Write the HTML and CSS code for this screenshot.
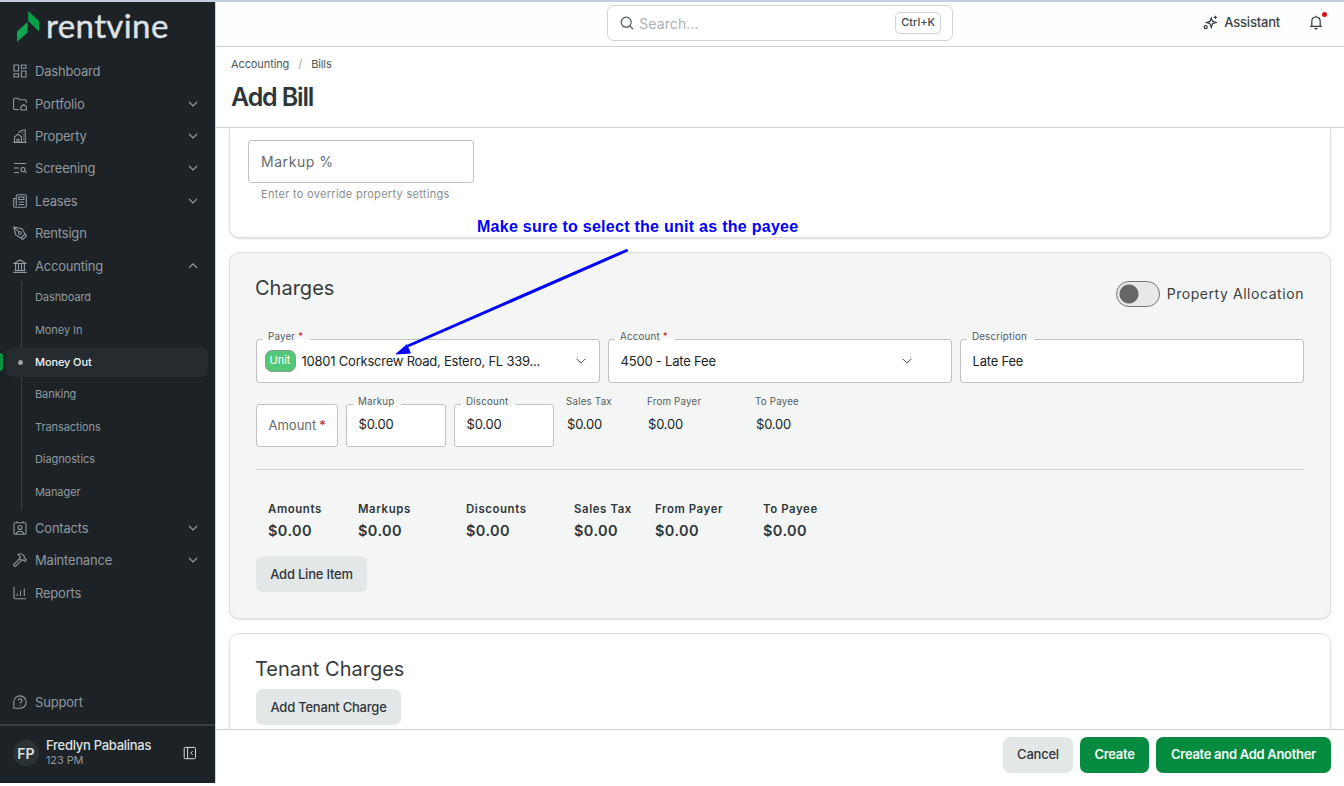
FILE: index.html
```html
<!DOCTYPE html>
<html lang="en">
<head>
<meta charset="utf-8">
<title>Add Bill</title>
<link rel="stylesheet" href="styles.css">
</head>
<body>
<div class="app">
  <aside class="sidebar">
    <div class="logo">
      <svg class="logo-mark" width="22" height="32" viewBox="0 0 22 32"><path fill="#12a650" d="M0 20.5 10.6 11v10.5L0 31z"/><path fill="#07a04a" d="M11.2 0 22 10v10.5L11.2 10z"/></svg>
      <span class="wordmark">rentvine</span>
    </div>
    <nav class="nav">
      <a class="item"><svg class="ico" viewBox="0 0 14 14"><path d="M1 1h4.6v6H1zM8.4 1H13v3.3H8.400zM8.400 7H13v6H8.400zM1 9.700h4.600V13H1z"/></svg><span>Dashboard</span></a>
      <a class="item"><svg class="ico" viewBox="0 0 14 14"><path d="M6 12.500H1.800C1 12.500.6 12 .6 11.300V2.500c0-.7.5-1.200 1.200-1.200h3.100l1.600 1.500h5.500c.8 0 1.400.5 1.400 1.300v2"/><path d="M8 13v-3.300l2.700-2.200 2.700 2.200V13z"/></svg><span>Portfolio</span><svg class="chev" viewBox="0 0 10 6"><path d="m1 .8 4 4 4-4"/></svg></a>
      <a class="item"><svg class="ico" viewBox="0 0 14 14"><path d="M.3 13.400h13.400M1.500 13.400V8L5 5l3.500 3v5.400M4 13.400v-3.200h2v3.200M5.300 3.500 8.500 1.500l3.700-.7v12.600M8.500 3.500h1.300M10 5.600h.8M10 8h.8M10 10.400h.8"/></svg><span>Property</span><svg class="chev" viewBox="0 0 10 6"><path d="m1 .8 4 4 4-4"/></svg></a>
      <a class="item"><svg class="ico" viewBox="0 0 14 14"><path d="M.8 2.500h12.400M.8 7H6M.8 11.500H6"/><circle cx="10" cy="8.600" r="2.100"/><path d="m11.600 10.200 1.900 2"/></svg><span>Screening</span><svg class="chev" viewBox="0 0 10 6"><path d="m1 .8 4 4 4-4"/></svg></a>
      <a class="item"><svg class="ico" viewBox="0 0 14 14"><path d="M3.300 11.800V2c0-.7.500-1.300 1.300-1.300H12c.8 0 1.300.6 1.300 1.300v10c0 .8-.5 1.300-1.300 1.300H2C1.200 13.300.7 12.800.7 12V4.500h2.600v7.300M5.700 3h5.200v2.500H5.700zM5.500 8h5.600M5.500 10.500h5.600"/></svg><span>Leases</span><svg class="chev" viewBox="0 0 10 6"><path d="m1 .8 4 4 4-4"/></svg></a>
      <a class="item"><svg class="ico" viewBox="0 0 14 14"><path d="M.8 1 9 2.700l3 5.300-4 4-5.300-3zM1 1.200l4.600 4.500M12 8l1.600 1.600-4 4L8 12"/><circle cx="6.800" cy="6.900" r="1.400"/></svg><span>Rentsign</span></a>
      <a class="item"><svg class="ico" viewBox="0 0 14 14"><path d="M.5 13.400h13M1.500 11.500h11M1 4.500 7 1l6 3.500zM2.600 4.500v7M5.500 5v6.500M8.500 5v6.500M11.400 4.500v7"/></svg><span>Accounting</span><svg class="chev" viewBox="0 0 10 6"><path d="m1 4.800 4-4 4 4"/></svg></a>
      <div class="subnav">
        <a class="sub">Dashboard</a>
        <a class="sub">Money In</a>
        <a class="sub current">Money Out</a>
        <a class="sub">Banking</a>
        <a class="sub">Transactions</a>
        <a class="sub">Diagnostics</a>
        <a class="sub">Manager</a>
      </div>
      <a class="item"><svg class="ico" viewBox="0 0 14 14"><rect x="1" y="1.700" width="12" height="11.600" rx="1.300"/><path d="M3.800.3v1.400M10.200.3v1.400M3 13c.6-2 2-2.800 4-2.800s3.400.8 4 2.800"/><circle cx="7" cy="6.500" r="2"/></svg><span>Contacts</span><svg class="chev" viewBox="0 0 10 6"><path d="m1 .8 4 4 4-4"/></svg></a>
      <a class="item"><svg class="ico" viewBox="0 0 14 14"><path d="M6.400 5.800.9 11.300c-.8.800.9 2.600 1.800 1.800L8.200 7.600M5 1.500c1.700-1 3.800-.8 5.200.6l1 1v1.800l2.300 1.900-1.800 1.800-2-1.900-1.500.8-1.900-2L7.500 4z"/></svg><span>Maintenance</span><svg class="chev" viewBox="0 0 10 6"><path d="m1 .8 4 4 4-4"/></svg></a>
      <a class="item"><svg class="ico" viewBox="0 0 14 14"><path d="M1 .8v10.500c0 .8.500 1.400 1.300 1.400H13M4.300 10V7.500M7.500 10V4.500M11.300 10V2.500"/></svg><span>Reports</span></a>
    </nav>
    <a class="item support"><svg class="ico" viewBox="0 0 14 14"><path d="M.8 13.300V7A6.200 6.200 0 1 1 7 13.300zM5.200 5.600c0-2.300 3.800-2.300 3.800 0C9 7 7.100 7 7.100 8.500M7.100 10v1"/></svg><span>Support</span></a>
    <div class="user">
      <span class="avatar">FP</span>
      <div class="who"><b>Fredlyn Pabalinas</b><small>123 PM</small></div>
      <svg class="collapse" width="14" height="14" viewBox="0 0 14 14"><rect x="1.200" y="1.400" width="11.300" height="11.300" rx="1"/><path d="M4.600 1.400v11.300M9.700 5 7.700 7l2 2"/></svg>
    </div>
  </aside>

  <main class="main">
    <header class="topbar">
      <div class="search">
        <svg width="14" height="14" viewBox="0 0 14 14"><circle cx="6.200" cy="6.200" r="5"/><path d="m9.800 9.800 3.200 3.200"/></svg>
        <span class="hint">Search...</span>
        <span class="kbd">Ctrl+K</span>
      </div>
      <div class="actions">
        <svg class="spark" width="15" height="15" viewBox="0 0 15 15"><path d="M8.300 3 9.500 6.400l3.500 1.200-3.500 1.200-1.200 3.700-1.300-3.700-3.500-1.200L7 6.400zM12.400.8v3M10.900 2.300h3"/><circle cx="2.700" cy="12.200" r="1.500"/></svg>
        <span class="assist">Assistant</span>
        <span class="bell"><svg width="14" height="15" viewBox="0 0 14 15"><path d="M1.200 11.300h11.600M2.800 11V6.500C2.800 3.800 4.600 2 7 2s4.200 1.800 4.200 4.500V11M7 2V.8M5.700 13c.4 1.100 2.200 1.100 2.600 0"/></svg><i class="dot"></i></span>
      </div>
    </header>
    <div class="heading">
      <div class="crumbs"><span>Accounting</span><i>/</i><span>Bills</span></div>
      <h1>Add Bill</h1>
    </div>
    <div class="content">
      <section class="card first">
        <div class="field percent"><span class="ph">Markup %</span></div>
        <p class="help">Enter to override property settings</p>
      </section>
      <section class="card charges">
        <div class="card-head">
          <h2>Charges</h2>
          <div class="toggle-wrap"><span class="toggle"></span><span class="toggle-label">Property Allocation</span></div>
        </div>
        <div class="row3">
          <div class="field"><label>Payer <em>*</em></label><span class="chip">Unit</span><span class="payer">10801 Corkscrew Road, Estero, FL 339...</span><svg class="drop" viewBox="0 0 10 6"><path d="m.5.6 4.500 4.500L9.500.6"/></svg></div>
          <div class="field account"><label>Account <em>*</em></label><span>4500 - Late Fee</span><svg class="drop" viewBox="0 0 10 6"><path d="m.5.6 4.500 4.500L9.500.6"/></svg></div>
          <div class="field"><label>Description</label><span>Late Fee</span></div>
        </div>
        <div class="row-amounts">
          <div class="field amount"><span class="ph">Amount</span><em>*</em></div>
          <div class="field small"><label>Markup</label><span>$0.00</span></div>
          <div class="field small"><label>Discount</label><span>$0.00</span></div>
          <div class="plain"><span>Sales Tax</span><b>$0.00</b></div>
          <div class="plain"><span>From Payer</span><b>$0.00</b></div>
          <div class="plain"><span>To Payee</span><b>$0.00</b></div>
        </div>
        <div class="totals">
          <div><span>Amounts</span><b>$0.00</b></div>
          <div><span>Markups</span><b>$0.00</b></div>
          <div><span>Discounts</span><b>$0.00</b></div>
          <div><span>Sales Tax</span><b>$0.00</b></div>
          <div><span>From Payer</span><b>$0.00</b></div>
          <div><span>To Payee</span><b>$0.00</b></div>
        </div>
        <button class="btn line">Add Line Item</button>
      </section>
      <section class="card tenant">
        <h2>Tenant Charges</h2>
        <button class="btn add-tenant">Add Tenant Charge</button>
      </section>
    </div>
    <footer class="footer">
      <button class="btn cancel">Cancel</button>
      <button class="btn primary">Create</button>
      <button class="btn primary wide">Create and Add Another</button>
    </footer>
  </main>
</div>
<div class="note">Make sure to select the unit as the payee</div>
<svg class="arrow" width="240" height="112" viewBox="0 0 240 112"><path d="M235.500 4.500 18 99.500" stroke="#00f" stroke-width="3" stroke-linecap="round"/><path d="M4 108.500 16 98l4 9.500z" fill="#00f"/></svg>
</body>
</html>
```
FILE: styles.css
```css
* { box-sizing: border-box; }
body { margin: 0; background: #fff; font-family: Inter, "Liberation Sans", sans-serif; color: #2f3639; overflow: hidden; }
h1, h2, p { margin: 0; font-weight: 400; }
svg { fill: none; flex: none; }
em { color: #b3202a; font-style: normal; }
.app { display: flex; height: 783px; border-top: 2px solid #c5cfe3; }

/* Sidebar */
.sidebar { width: 215px; background: #1d2226; display: flex; flex-direction: column; color: #8f999f; }
.logo { height: 53px; padding: 9px 0 0 17px; display: flex; gap: 7px; }
.wordmark { font: 33px/29px Lato, sans-serif; color: #dfe3e6; letter-spacing: .4px; -webkit-text-stroke: .4px #dfe3e6; }
.item { height: 32.400px; display: flex; align-items: center; padding: 0 17px 0 13px; font-size: 13px; letter-spacing: -.2px; }
.ico { width: 14px; height: 14px; margin-right: 8px; stroke: #8f999f; stroke-width: 1.100; }
.chev { width: 10px; height: 6px; margin-left: auto; stroke: #98a2a7; stroke-width: 1.200; }
.subnav { margin-top: -.6px; padding-bottom: 4px; background: linear-gradient(#3a4145, #3a4145) 21px 0 / 1px 229px no-repeat; }
.sub { height: 32.400px; display: flex; align-items: center; padding-left: 35px; font-size: 11px; letter-spacing: -.08px; }
.current { position: relative; margin: 1.700px 7px 1.700px 6px; height: 29px; padding-left: 29px; border-radius: 6px; background: #262b2f; color: #f0f3f4; font-weight: 500; letter-spacing: -.12px; }
.current::before { content: ""; position: absolute; left: -9px; top: 5px; width: 6px; height: 18px; border-radius: 3px; background: #079246; }
.current::after { content: ""; position: absolute; left: 12px; top: 12px; width: 5px; height: 5px; border-radius: 50%; background: #99a2a7; }
.support { margin-top: auto; margin-bottom: 6px; }
.user { height: 59px; border-top: 2px solid #373d41; display: flex; align-items: center; padding: 0 25px 3px 13px; }
.avatar { width: 26px; height: 26px; border-radius: 50%; background: #2a3234; color: #dfe3e5; font-size: 14px; font-weight: 600; display: grid; place-items: center; }
.who { margin: -1px 0 0 7px; display: flex; flex-direction: column; flex: 1; }
.who b { font-size: 13px; line-height: 16px; font-weight: 500; color: #dde1e3; white-space: nowrap; letter-spacing: -.28px; }
.who small { font-size: 11px; line-height: 15px; letter-spacing: -.1px; }
.collapse { stroke: #d4d9db; margin-right: -7px; }

/* Main column */
.main { flex: 1; min-width: 0; display: flex; flex-direction: column; border-left: 1px solid #d2d5d6; }
.topbar { height: 45px; border-bottom: 1px solid #cfd2d3; display: flex; justify-content: flex-end; padding-right: 21px; background: #fefefe; }
.search { width: 346px; height: 36px; margin: 3px 250px 0 0; border: 1px solid #cfd4d6; border-radius: 7px; display: flex; align-items: center; padding: 0 11px 0 12px; background: #fff; }
.search svg { stroke: #4a555b; stroke-width: 1.200; }
.hint { font-size: 14px; color: #a9b1b4; margin-left: 5px; letter-spacing: .1px; }
.kbd { margin-left: auto; width: 46px; height: 22px; border: 1px solid #cfd4d6; border-radius: 5px; font-size: 11px; font-weight: 500; line-height: 19px; text-align: center; color: #3d474c; }
.actions { display: flex; align-items: center; padding-bottom: 3px; }
.actions svg { stroke: #343c41; stroke-width: 1.200; display: block; }
.assist { font-size: 13px; font-weight: 500; margin: -1px 29px 0 6px; color: #3a4246; letter-spacing: -.2px; }
.bell { position: relative; }
.dot { position: absolute; right: -4px; top: -3px; width: 5px; height: 5px; border-radius: 50%; background: #d5141c; }
.heading { height: 81px; border-bottom: 1px solid #cfd3d4; padding: 10px 0 0 15px; }
.crumbs { font-size: 11px; line-height: 15px; color: #4c5659; display: flex; letter-spacing: -.1px; }
.crumbs i { font-style: normal; color: #939b9e; margin: 0 9px; }
h1 { font-size: 25px; font-weight: 600; line-height: 34px; margin-top: 8px; letter-spacing: -1.150px; color: #2e3539; }
.content { flex: 1; min-height: 0; overflow: hidden; padding: 0 13px; }
.card { border: 1px solid #dfe1e2; border-radius: 10px; background: #fff; box-shadow: 0 1px 2px #0002; }
.first { height: 110px; border-top: 0; border-radius: 0 0 10px 10px; padding: 12px 18px; }
.field { position: relative; height: 44px; border: 1px solid #bfc1c2; border-radius: 3px; background: #fff; display: flex; align-items: center; padding: 0 0 1px 12px; font-size: 13px; letter-spacing: -.2px; color: #202426; }
.field label { position: absolute; left: 6px; top: -11px; padding: 0 7px 0 5px; font-size: 9.750px; line-height: 16px; letter-spacing: .2px; color: #565b5d; background: linear-gradient(#fff, #fff) 0 10px / 100% 1px no-repeat; white-space: nowrap; }
.ph { color: #666b6d; }
.percent { width: 226px; height: 43px; padding-bottom: 0; font-size: 14px; letter-spacing: .55px; }
.help { font-size: 11px; line-height: 16px; margin: 3px 0 0 13px; color: #8a8e8f; letter-spacing: .29px; }
.charges { margin-top: 14px; height: 367px; background: #f4f6f5; padding: 0 26px; }
.card-head { height: 86px; display: flex; justify-content: space-between; }
h2 { font-size: 20px; line-height: 28px; letter-spacing: 0; color: #373b3c; }
.card-head h2 { margin: 21px 0 0 -1px; }
.toggle-wrap { display: flex; height: 26px; margin-top: 28px; align-items: center; font-size: 14px; letter-spacing: .56px; gap: 7px; color: #3a3e3f; }
.toggle-label { padding-bottom: 2px; }
.toggle { width: 44px; height: 26px; border: 1px solid #777; border-radius: 13px; background: radial-gradient(circle at 12px 12px, #666 9px, #e8e8e8 10px); }
.row3 { display: grid; grid-template-columns: repeat(3, 1fr); gap: 8px; }
.row3 .field { padding-left: 11.500px; }
.chip { height: 22px; width: 31px; margin: 0 6px 0 -4px; border: 1px solid #8a9b8e; border-radius: 7px; background: #50c878; color: #fff; text-align: center; font-size: 11px; line-height: 19px; letter-spacing: 0; }
.drop { width: 10px; height: 6px; margin-left: auto; margin-right: 13px; stroke: #555; }
.account .drop { margin-right: 39px; }
.payer { letter-spacing: -.23px; white-space: nowrap; }
.row-amounts { display: flex; margin-top: 21px; gap: 8px; padding-bottom: 22px; border-bottom: 1px solid #d1d4d4; height: 66px; }
.row-amounts .field { height: 43px; padding-left: 11.500px; }
.row-amounts .amount { width: 82px; letter-spacing: 0; gap: 3px; }
.row-amounts .small { width: 100px; padding-bottom: 3px; }
.plain { width: 73px; margin: -10px 0 0 4px; display: flex; flex-direction: column; font-size: 9.750px; line-height: 16px; letter-spacing: .2px; color: #565b5d; }
.plain + .plain { width: 100px; margin-left: 0; }
.plain b { font-size: 13px; font-weight: 400; letter-spacing: -.2px; margin: 5px 0 0 1px; line-height: 18px; color: #202426; }
.totals { display: grid; grid-template-columns: 90px 108px 108px 81px 108px 100px; padding: 31px 0 0 12px; height: 86px; }
.totals div { display: flex; flex-direction: column; font-weight: 600; font-size: 11.400px; line-height: 16px; letter-spacing: .6px; }
.totals b { font-size: 14.500px; line-height: 20px; font-weight: 600; margin-top: 4px; letter-spacing: .4px; }
.btn { display: block; height: 36px; border: 0; border-radius: 7px; background: #e3e7e8; color: #2f3639; font: 500 13px Inter, sans-serif; padding: 0 14px 2px; white-space: nowrap; letter-spacing: -.22px; }
.line { width: 111px; padding-bottom: 1px; }
.add-tenant { width: 145px; padding-bottom: 1px; }
.tenant { margin-top: 14px; height: 150px; padding: 21px 26px; }
.tenant h2 { margin: 0 0 6px -1px; }
.footer { height: 54px; border-top: 1px solid #cfd2d3; display: flex; justify-content: flex-end; gap: 7px; padding: 7px 13px 0 0; background: #fff; }
.cancel { width: 70px; }
.primary { width: 69px; background: #058b3f; color: #f4fff7; font-weight: 600; letter-spacing: -.3px; }
.wide { width: 175px; }

/* Annotation */
.note { position: absolute; left: 477px; top: 217px; font: bold 16px/19px "Liberation Sans", Arial, sans-serif; letter-spacing: .27px; color: #00f; white-space: nowrap; }
.arrow { position: absolute; left: 391px; top: 246px; }
```
